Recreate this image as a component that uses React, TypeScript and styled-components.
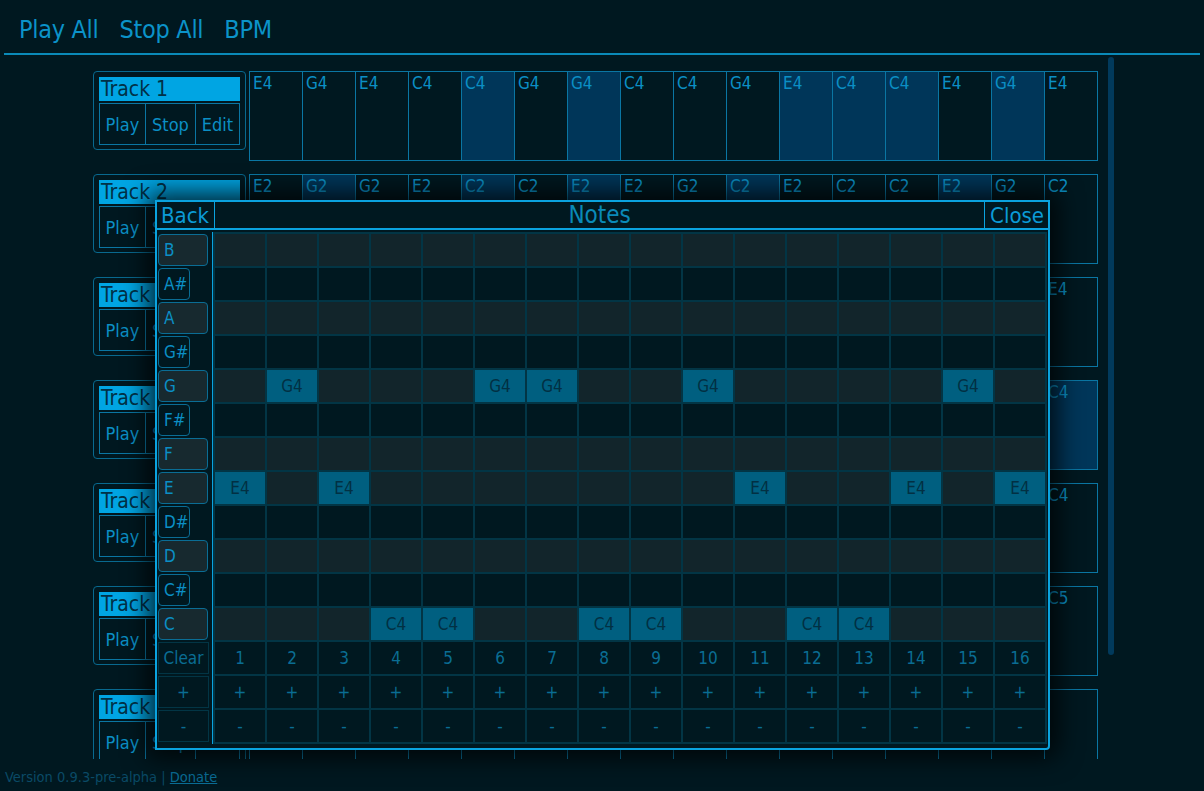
import React from 'react'
import styled, { createGlobalStyle } from 'styled-components'

const GlobalStyle = createGlobalStyle`
    *, *::before, *::after {
        box-sizing: border-box;
    }
    html, body {
        margin: 0;
        padding: 0;
        background: #001820;
        height: 100%;
    }
    body {
        font-family: "DejaVu Sans Condensed", "Liberation Sans", sans-serif;
        color: #0b8fc5;
        overflow: hidden;
    }
`

const Page = styled.div`
    position: relative;
    width: 1204px;
    height: 791px;
`

const Nav = styled.div`
    display: flex;
    align-items: center;
    gap: 21px;
    margin: 0 4px 2px 4px;
    padding: 5px 15px 0 15px;
    height: 55px;
    border-bottom: 2px solid #0a8ab8;
`

const NavItem = styled.span`
    font-size: 25px;
    letter-spacing: -0.3px;
    color: #0b93c9;
    cursor: pointer;
`

const TrackArea = styled.div`
    position: relative;
    height: 702px;
    width: 1116px;
    overflow: hidden;
`

const ScrollThumb = styled.div`
    position: absolute;
    top: 0;
    left: 1108px;
    width: 6px;
    height: 598px;
    border-radius: 3px;
    background: #013a5c;
`

const TrackList = styled.div`
    display: flex;
    flex-direction: column;
    gap: 13px;
    padding: 14px 0 0 93px;
`

const TrackRow = styled.div`
    display: flex;
    align-items: flex-start;
    gap: 3px;
`

const TrackPanel = styled.div`
    width: 153px;
    padding: 5px 5px 4px 5px;
    border: 1px solid #08698f;
    border-radius: 4px;
`

const TrackName = styled.div`
    height: 24px;
    line-height: 25px;
    padding-left: 2px;
    background: #00a5e3;
    color: #013147;
    font-size: 21px;
    margin-bottom: 2px;
    white-space: nowrap;
    overflow: hidden;
`

const TrackButtons = styled.div`
    display: flex;
    height: 42px;
`

const TrackButton = styled.div<{ $w: number }>`
    width: ${p => p.$w}px;
    flex: none;
    display: flex;
    align-items: center;
    justify-content: center;
    border: 1px solid #0a76a3;
    margin-right: -1px;
    font-size: 18px;
    color: #0b8fc5;
    cursor: pointer;
`

const StepGrid = styled.div`
    display: grid;
    grid-template-columns: repeat(16, 53px);
    height: 90px;
    border: 1px solid #0a76a3;
    border-right: none;
`

const Step = styled.div<{ $on: boolean }>`
    border-right: 1px solid #0a76a3;
    background: ${p => (p.$on ? '#003659' : 'transparent')};
    padding: 1px 0 0 3px;
    font-size: 17px;
    color: #0b8fc5;
`

const Footer = styled.div`
    padding: 10px 5px 0 5px;
    font-size: 14.5px;
    color: #0a4a66;
`

const Donate = styled.a`
    color: #0a6d96;
    text-decoration: underline;
`

const Modal = styled.div`
    position: absolute;
    left: 155px;
    top: 200px;
    width: 895px;
    height: 550px;
    border: 2px solid #0aa3df;
    border-radius: 0 0 4px 0;
    background: #001820;
    box-shadow: 0 0 24px 8px rgba(0, 0, 0, 0.75);
    display: flex;
    flex-direction: column;
`

const ModalHeader = styled.div`
    display: flex;
    align-items: flex-start;
    height: 28px;
    border-bottom: 2px solid #0aa3df;
`

const HeaderButton = styled.div<{ $side: 'left' | 'right' }>`
    display: flex;
    align-items: center;
    padding: 0 5px;
    font-size: 22px;
    color: #0b9bd6;
    margin-top: -2px;
    height: 30px;
    border: 1px solid #0aa3df;
    border-bottom: none;
    ${p => (p.$side === 'left' ? 'margin-left: -2px;' : 'margin-right: -2px;')}
    cursor: pointer;
`

const ModalTitle = styled.div`
    flex: 1;
    text-align: center;
    font-size: 24px;
    line-height: 27px;
    color: #0a8ab8;
`

const ModalBody = styled.div`
    display: flex;
    padding: 2px 0 0 1px;
`

const KeyColumn = styled.div`
    display: flex;
    flex-direction: column;
    gap: 2px;
    width: 52px;
    margin-top: 2px;
`

const Key = styled.div<{ $sharp: boolean }>`
    height: 32px;
    width: ${p => (p.$sharp ? 32 : 50)}px;
    border: 1px solid #0a6d95;
    border-radius: 4px;
    background: ${p => (p.$sharp ? '#001820' : '#17292f')};
    display: flex;
    align-items: center;
    padding-left: 5px;
    font-size: 17px;
    color: #0b8fc5;
`

const ControlCell = styled.div`
    height: 32px;
    width: 51px;
    border: 1px solid #023545;
    display: flex;
    align-items: center;
    justify-content: center;
    font-size: 17px;
    color: #0a6d93;
    cursor: pointer;
`

const Divider = styled.div`
    width: 1px;
    margin-left: 2px;
    height: 512px;
    background: #0aa3df;
`

const NoteGrid = styled.div`
    display: grid;
    grid-template-columns: repeat(16, 50px);
    grid-auto-rows: 32px;
    gap: 2px;
    padding: 2px;
    background: #023545;
`

const NoteCell = styled.div<{ $kind: 'natural' | 'sharp' | 'on' | 'control' }>`
    display: flex;
    align-items: center;
    justify-content: center;
    font-size: 17px;
    background: ${p =>
        p.$kind === 'on' ? '#005f80' : p.$kind === 'natural' ? '#12252b' : '#001820'};
    color: ${p => (p.$kind === 'on' ? '#023043' : '#0a6d93')};
`

type Track = { name: string; notes: string[]; on: number[] }

const seq = (s: string) => s.split(' ')

const tracks: Track[] = [
    { name: 'Track 1', notes: seq('E4 G4 E4 C4 C4 G4 G4 C4 C4 G4 E4 C4 C4 E4 G4 E4'), on: [5, 7, 11, 12, 13, 15] },
    { name: 'Track 2', notes: seq('E2 G2 G2 E2 C2 C2 E2 E2 G2 C2 E2 C2 C2 E2 G2 C2'), on: [2, 5, 7, 10, 14] },
    { name: 'Track 3', notes: seq('C4 E4 G4 E4 C4 E4 G4 E4 C4 E4 G4 E4 C4 E4 G4 E4'), on: [1, 9] },
    { name: 'Track 4', notes: seq('G4 E4 C4 E4 G4 E4 C4 E4 G4 E4 C4 E4 G4 E4 C4 C4'), on: [4, 8, 16] },
    { name: 'Track 5', notes: seq('E4 C4 G4 C4 E4 C4 G4 C4 E4 C4 G4 C4 E4 C4 G4 C4'), on: [] },
    { name: 'Track 6', notes: seq('C5 G4 E4 G4 C5 G4 E4 G4 C5 G4 E4 G4 C5 G4 E4 C5'), on: [] },
    { name: 'Track 7', notes: seq('C3 - - - G2 - - - C3 - - - G2 - - -'), on: [] },
]

const keys = ['B', 'A#', 'A', 'G#', 'G', 'F#', 'F', 'E', 'D#', 'D', 'C#', 'C']

const melody = tracks[0].notes

const App = () => {
    const cols = Array.from({ length: 16 }, (_, i) => i)
    return (
        <Page>
            <GlobalStyle />
            <Nav>
                <NavItem>Play All</NavItem>
                <NavItem>Stop All</NavItem>
                <NavItem>BPM</NavItem>
            </Nav>
            <TrackArea>
                <TrackList>
                    {tracks.map(t => (
                        <TrackRow key={t.name}>
                            <TrackPanel>
                                <TrackName>{t.name}</TrackName>
                                <TrackButtons>
                                    <TrackButton $w={47}>Play</TrackButton>
                                    <TrackButton $w={51}>Stop</TrackButton>
                                    <TrackButton $w={45}>Edit</TrackButton>
                                </TrackButtons>
                            </TrackPanel>
                            <StepGrid>
                                {t.notes.map((n, i) => (
                                    <Step key={i} $on={t.on.includes(i + 1)}>
                                        {n === '-' ? '' : n}
                                    </Step>
                                ))}
                            </StepGrid>
                        </TrackRow>
                    ))}
                </TrackList>
                <ScrollThumb />
            </TrackArea>
            <Footer>
                Version 0.9.3-pre-alpha | <Donate href="#">Donate</Donate>
            </Footer>

            <Modal>
                <ModalHeader>
                    <HeaderButton $side="left">Back</HeaderButton>
                    <ModalTitle>Notes</ModalTitle>
                    <HeaderButton $side="right">Close</HeaderButton>
                </ModalHeader>
                <ModalBody>
                    <KeyColumn>
                        {keys.map(k => (
                            <Key key={k} $sharp={k.includes('#')}>
                                {k}
                            </Key>
                        ))}
                        <ControlCell>Clear</ControlCell>
                        <ControlCell>+</ControlCell>
                        <ControlCell>-</ControlCell>
                    </KeyColumn>
                    <Divider />
                    <NoteGrid>
                        {keys.map(k =>
                            cols.map(c => {
                                const on = melody[c] === k + '4'
                                return (
                                    <NoteCell
                                        key={k + c}
                                        $kind={on ? 'on' : k.includes('#') ? 'sharp' : 'natural'}
                                    >
                                        {on ? melody[c] : ''}
                                    </NoteCell>
                                )
                            })
                        )}
                        {cols.map(c => (
                            <NoteCell key={'n' + c} $kind="control">{c + 1}</NoteCell>
                        ))}
                        {cols.map(c => (
                            <NoteCell key={'p' + c} $kind="control">+</NoteCell>
                        ))}
                        {cols.map(c => (
                            <NoteCell key={'m' + c} $kind="control">-</NoteCell>
                        ))}
                    </NoteGrid>
                </ModalBody>
            </Modal>
        </Page>
    )
}

export default App
